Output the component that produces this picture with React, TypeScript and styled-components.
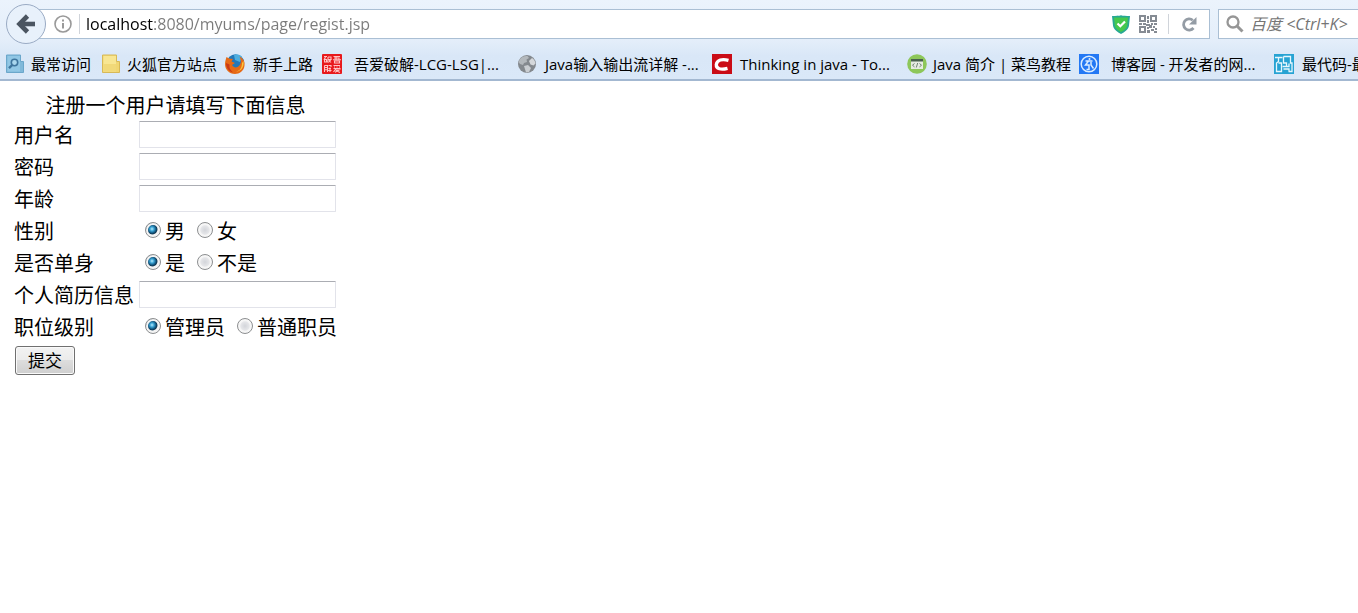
import React from "react";
import styled, { createGlobalStyle } from "styled-components";

const uiFont = `"Open Sans", "Noto Sans CJK SC", sans-serif`;

const GlobalStyle = createGlobalStyle`
  *, *::before, *::after { box-sizing: border-box; }
  html { overflow-x: hidden; }
  body {
    margin: 0;
    background: #fff;
    color: #000;
    font-family: ${uiFont};
  }
`;

const Chrome = styled.header`
  background: linear-gradient(#ebf3fc 0, #e4eefa 40px, #d9e7f7 56px, #dae8f8 100%);
  border-bottom: 2px solid #a3b8d1;
`;

const NavBar = styled.div`
  display: flex;
  align-items: center;
  height: 48px;
  padding-left: 6px;
  overflow: hidden;
`;

const BackButton = styled.button`
  flex: none;
  display: grid;
  place-items: center;
  width: 40px;
  height: 40px;
  padding: 0;
  border: 1px solid #9aabc4;
  border-radius: 50%;
  background: #e8f1fb;
  z-index: 1;
`;

const AddressBar = styled.div`
  flex: 1;
  min-width: 0;
  display: flex;
  align-items: center;
  height: 30px;
  margin-left: -8px;
  padding: 0 10px 0 14px;
  border: 1px solid #aabfd4;
  background: #fff;
`;

const AddressInput = styled.input`
  flex: 1;
  min-width: 0;
  height: 28px;
  padding: 0;
  border: 0;
  outline: 0;
  font: 16px/24px ${uiFont};
  color: transparent;
  background: linear-gradient(90deg, #000 67px, #7a7a7a 67px);
  background-clip: text;
  -webkit-background-clip: text;
`;

const Separator = styled.span<{ $gap: number }>`
  flex: none;
  width: 1px;
  height: 20px;
  margin: 0 ${(p) => p.$gap}px;
  background: #d0d4da;
`;

const IconButton = styled.button`
  flex: none;
  display: grid;
  place-items: center;
  width: 20px;
  height: 20px;
  padding: 0;
  border: 0;
  background: none;
`;

const PageActions = styled.div`
  display: flex;
  align-items: center;
  gap: 7px;
`;

const SearchBox = styled.label`
  flex: none;
  display: flex;
  align-items: center;
  gap: 6px;
  width: 148px;
  height: 30px;
  margin: 0 -8px 0 8px;
  padding-left: 7px;
  border: 1px solid #aabfd4;
  background: #fff;
`;

const SearchInput = styled.input`
  flex: 1;
  min-width: 0;
  height: 28px;
  padding: 0;
  border: 0;
  outline: 0;
  background: none;
  font: 16px/24px ${uiFont};
  &::placeholder {
    color: #757575;
    font-style: italic;
    opacity: 1;
  }
`;

const BookmarkBar = styled.nav`
  display: flex;
  height: 31px;
  padding-left: 5px;
  overflow: hidden;
`;

const Bookmark = styled.a<{ $width: number; $gap: number }>`
  flex: none;
  display: flex;
  align-items: center;
  gap: ${(p) => p.$gap}px;
  width: ${(p) => p.$width}px;
  height: 31px;
  color: #000;
  font-size: 15px;
  line-height: 24px;
  text-decoration: none;
  white-space: nowrap;
  svg { flex: none; }
`;

const Page = styled.main`
  padding: 9px 11px;
`;

const FormTable = styled.table`
  border-spacing: 2px;
  font-size: 20px;
  line-height: 28px;
`;

const Title = styled.th`
  height: 26px;
  padding: 2px 1px 0;
  font-weight: 400;
  line-height: 24px;
  text-align: center;
`;

const LabelCell = styled.th`
  padding: 2px 1px 0;
  font-weight: 400;
  text-align: left;
  white-space: nowrap;
`;

const FieldCell = styled.td`
  height: 30px;
  padding: 1px 1px 0 2px;
  vertical-align: top;
`;

const SubmitCell = styled.td`
  padding: 1px;
`;

const TextField = styled.input`
  display: block;
  width: 197px;
  height: 27px;
  padding: 2px 4px;
  border: 1px solid #e2e3ea;
  border-top-color: #abadb3;
  border-radius: 1px;
  background: #fff;
  font: 17px/20px ${uiFont};
`;

const RadioGroup = styled.div`
  display: flex;
  gap: 12px;
  padding: 1px 0 0 6px;
  white-space: nowrap;
`;

const RadioLabel = styled.label`
  display: flex;
  align-items: center;
  gap: 4px;
`;

const Radio = styled.input`
  appearance: none;
  flex: none;
  width: 16px;
  height: 16px;
  margin: 0 0 4px;
  border: 1px solid #8c8e90;
  border-radius: 50%;
  background: radial-gradient(circle at 7px 7px, #d3d5da 0, #e4e5e8 4px, #f7f7f7 6px);
  box-shadow: inset 0 0 0 2px #f6f6f6;
  &:checked {
    background: radial-gradient(circle at 6px 6px, #b9ecfb 0, #3ba5d6 2px, #11567f 4px, #0e3550 5px, transparent 6px), #f4f4f4;
    box-shadow: inset 0 0 0 2px #f4f4f4;
  }
`;

const SubmitButton = styled.button`
  display: block;
  width: 60px;
  height: 29px;
  margin: 1px;
  padding: 0;
  border: 1px solid #707070;
  border-radius: 3px;
  background: linear-gradient(#f2f2f2 0, #ebebeb 50%, #dddddd 50%, #cfcfcf 100%);
  box-shadow: inset 0 0 0 1px #fafafa;
  color: #000;
  font: 17px/24px ${uiFont};
`;

const BackIcon = () => (
  <svg width="22" height="22" viewBox="0 0 22 22" fill="none" stroke="#4b5561" strokeWidth="4.600">
    <path d="M12.500 3 4.500 11l8 8" />
    <path d="M5 11h15" />
  </svg>
);

const InfoIcon = () => (
  <svg width="18" height="18" viewBox="0 0 18 18" fill="none" stroke="#999" strokeWidth="1.600">
    <circle cx="9" cy="9" r="8" />
    <path d="M9 8v5.500" strokeWidth="2" />
    <path d="M9 4.500v2" strokeWidth="2" />
  </svg>
);

const ShieldIcon = () => (
  <svg width="18" height="19" viewBox="0 0 18 19">
    <path d="M0 1c4 0 7 0 9-.7C11 1 14 1 18 1l-1 9.500c-.5 4-4.500 6.500-8 8.500-3.500-2-7.500-4.500-8-8.500z" fill="#27a894" />
    <path d="M2 2.500h14l-.8 8c-.4 2.800-3.200 4.800-6.200 6.500-3-1.700-5.800-3.700-6.200-6.500z" fill="#45c84d" />
    <path d="m5.500 8.500 2.800 2.800L13 6.500" fill="none" stroke="#fff" strokeWidth="2.200" />
  </svg>
);

const QrIcon = () => (
  <svg width="18" height="18" viewBox="0 0 18 18" fill="#858b93">
    <path
      fillRule="evenodd"
      d="M0 0h7v7H0zM2 2v3h3V2zM11 0h7v7h-7zM13 2v3h3V2zM0 11h7v7H0zM2 13v3h3v-3z"
    />
    <path d="M8 1h2v3H8zM8 5h2v3H8zM0 8h3v2H0zM4 8h3v2H4zM7 9h4v2H7zM12 8h2v2h-2zM15 8h3v2h-3zM8 12h2v2H8zM10 10h3v3h-3zM14 11h2v2h-2zM16 13h2v2h-2zM12 14h3v2h-3zM8 15h3v3H8zM15 16h3v2h-3z" />
  </svg>
);

const ReloadIcon = () => (
  <svg width="16" height="16" viewBox="0 0 16 16">
    <path d="M12.500 12A5.600 5.600 0 1 1 11.800 4.200" fill="none" stroke="#949ca5" strokeWidth="2.800" />
    <path d="M15.500 1v7.500H8z" fill="#949ca5" />
  </svg>
);

const SearchIcon = () => (
  <svg width="18" height="18" viewBox="0 0 18 18" fill="none" stroke="#969696">
    <circle cx="7" cy="7" r="5.500" strokeWidth="2.300" />
    <path d="m11 11 5.500 5.500" strokeWidth="3" />
  </svg>
);

const FrequentIcon = () => (
  <svg width="20" height="20" viewBox="0 0 20 20">
    <path d="M1.500 1h14v6.500h3v11h-17z" fill="#80b9da" stroke="#6ba7cb" />
    <path d="M2.500 2H15v15.500H2.500z" fill="#91c7e5" />
    <circle cx="9.500" cy="8.500" r="3.200" fill="#aad7ee" stroke="#3f759d" strokeWidth="1.600" />
    <path d="m7.200 11-3.200 3.200" stroke="#3f759d" strokeWidth="2.400" />
  </svg>
);

const FolderIcon = () => (
  <svg width="20" height="20" viewBox="0 0 20 20">
    <path d="M1.500 1h14v6.500h3v11h-17z" fill="#f0d672" stroke="#d7b957" />
    <path d="M2.500 2H15v15.500H2.500z" fill="#f8e692" />
    <path d="M2.500 10H15v7.500H2.500z" fill="#f1d979" />
  </svg>
);

const FirefoxIcon = () => (
  <svg width="20" height="20" viewBox="0 0 20 20">
    <circle cx="10.500" cy="9" r="8.700" fill="#2379ba" />
    <path d="M9 1c4-1 7 0 8 2l-2 5-5-2z" fill="#4eafe0" />
    <path
      d="M1.500 3 4 4.500 8 5 6.500 7.500 10 9 7 11c2 3.500 6 3 8-.5 1.500-2.500 1-5-.5-8 4 2 5.500 5 5 9C19 17 14.500 20 10 20 4 20 0 15.500 0 10c0-3 1-5 1.500-7z"
      fill="#e66a16"
    />
    <path d="M18.500 7c1 7-3.500 11-9 11 5-.5 7.500-4 7.500-9z" fill="#fbc63a" />
    <path d="M1 9c0 5 3 8.500 7 9.500-3-2.500-4-5-3.500-8z" fill="#c93817" />
  </svg>
);

const SealIcon = () => (
  <svg width="20" height="20" viewBox="0 0 20 20" fill="none" stroke="#ffc4c4" strokeWidth="1.100">
    <rect width="20" height="20" rx="1" fill="#e8191c" stroke="none" />
    <path d="M2 2.500h3M3.500 3 2 6M2.500 5.500h2v2.500h-2zM6 3h3v2M6 3v3L5.500 8.500M6.500 5.500H9L6.500 8.500M7 6l2 2.500" />
    <path d="M11.500 2.500h6.500M14 2.500v3M12 4h5v1.500M11 5.700h8M12.500 7h5v2h-5z" />
    <path d="M2.500 11.500h3V18M2.500 11.500V18M2.500 13.500h3M2.500 15.700h3M6.500 11.500H9V13M6.500 14.500H9M6 16.500h3.500M8 13.500V18" />
    <path d="M11.500 11.500h6.500M12 13h1M14.500 13h1M17 13h1M11.500 14.500h7M14 14.500 11.500 18M13.500 16h3.500L13 18.300M14 16.500l4 2" />
  </svg>
);

const GlobeIcon = () => (
  <svg width="20" height="20" viewBox="0 0 20 20">
    <circle cx="10" cy="10" r="9" fill="#84898e" />
    <path d="M3 5c2-2.500 5-3.500 7.500-3L12 4 9.500 5.500 10 8 7 9l-1 2-3-1-1.500-2z" fill="#b3b8bc" />
    <path d="m12 7 3-3c2 1 3 3 3.500 5.500l-2 2-3-1z" fill="#d5d8db" />
    <path d="m7 12 4-1 3 3-2 4-3 .5z" fill="#c9cdd1" />
  </svg>
);

const CsdnIcon = () => (
  <svg width="20" height="20" viewBox="0 0 20 20" aria-hidden="true">
    <rect width="20" height="20" fill="#ca0c16" />
    <path d="M16.500 6.300C10 4.500 5 6 4.300 10.500 4 15 9 16 15.500 14.300" fill="none" stroke="#fff" strokeWidth="3.300" />
  </svg>
);

const CodeIcon = () => (
  <svg width="20" height="20" viewBox="0 0 20 20">
    <circle cx="10" cy="10" r="9.800" fill="#8dc75a" />
    <rect x="4" y="5" width="12" height="10" fill="#e6ece2" />
    <path d="M4 5h12v2.500H4z" fill="#49614d" />
    <path d="m7.500 9.500-2 1.700 2 1.700m5-3.400 2 1.700-2 1.700M10.700 9l-1.400 4.500" fill="none" stroke="#718172" />
  </svg>
);

const BlogIcon = () => (
  <svg width="20" height="20" viewBox="0 0 20 20" fill="none" stroke="#d9ecff">
    <rect width="20" height="20" fill="#2378f4" stroke="none" />
    <circle cx="10" cy="10" r="7.800" strokeWidth="1.500" />
    <path d="M6.500 7h7M9.500 7 6.500 11h3.500v4.500H7.500M12 8v3l2.500 3.500" strokeWidth="1.500" />
    <circle cx="10.500" cy="5" r="1" fill="#d9ecff" stroke="none" />
  </svg>
);

const CircuitIcon = () => (
  <svg width="20" height="20" viewBox="0 0 20 20" fill="none" stroke="#e6f7fd" strokeWidth="1.300">
    <rect width="20" height="20" fill="#27a3d3" stroke="none" />
    <path d="M1 3.500h7.500M4.500 4v3.500L2.500 9v8.500h5V9h-3" />
    <path d="M9.500 2.500h7V9H18v8.500h-3.500M9.500 2.500V9h3v3.500M8.500 12.500H15V9.500M9.500 15h5.500v2.500" />
  </svg>
);

const bookmarks = [
  { title: "最常访问", icon: FrequentIcon, width: 96, gap: 6 },
  { title: "火狐官方站点", icon: FolderIcon, width: 124, gap: 6 },
  { title: "新手上路", icon: FirefoxIcon, width: 97, gap: 8 },
  { title: "吾爱破解-LCG-LSG|...", icon: SealIcon, width: 195, gap: 12 },
  { title: "Java输入输出流详解 -...", icon: GlobeIcon, width: 195, gap: 8 },
  { title: "Thinking in java - To...", icon: CsdnIcon, width: 195, gap: 8 },
  { title: "Java 简介 | 菜鸟教程", icon: CodeIcon, width: 172, gap: 6 },
  { title: "博客园 - 开发者的网...", icon: BlogIcon, width: 195, gap: 12 },
  { title: "最代码-最专业的源码", icon: CircuitIcon, width: 195, gap: 8 },
];

function TextRow({ id, label, type = "text" }: { id: string; label: string; type?: string }) {
  return (
    <tr>
      <LabelCell scope="row"><label htmlFor={id}>{label}</label></LabelCell>
      <FieldCell><TextField id={id} name={id} type={type} /></FieldCell>
    </tr>
  );
}

function RadioRow({ name, label, options }: { name: string; label: string; options: string[] }) {
  return (
    <tr>
      <LabelCell scope="row" id={`${name}-label`}>{label}</LabelCell>
      <FieldCell>
        <RadioGroup role="radiogroup" aria-labelledby={`${name}-label`}>
          {options.map((option, i) => (
            <RadioLabel key={option}>
              <Radio type="radio" name={name} value={option} defaultChecked={i === 0} />
              {option}
            </RadioLabel>
          ))}
        </RadioGroup>
      </FieldCell>
    </tr>
  );
}

export default function App() {
  return (
    <>
      <GlobalStyle />
      <Chrome>
        <NavBar>
          <BackButton type="button" aria-label="后退"><BackIcon /></BackButton>
          <AddressBar>
            <IconButton type="button" aria-label="网站信息"><InfoIcon /></IconButton>
            <Separator $gap={6} />
            <AddressInput aria-label="地址" defaultValue="localhost:8080/myums/page/regist.jsp" spellCheck={false} />
            <PageActions>
              <IconButton type="button" aria-label="安全"><ShieldIcon /></IconButton>
              <IconButton type="button" aria-label="二维码"><QrIcon /></IconButton>
            </PageActions>
            <Separator $gap={10} />
            <IconButton type="button" aria-label="刷新"><ReloadIcon /></IconButton>
          </AddressBar>
          <SearchBox>
            <SearchIcon />
            <SearchInput aria-label="搜索" placeholder="百度 <Ctrl+K>" />
          </SearchBox>
        </NavBar>
        <BookmarkBar aria-label="书签">
          {bookmarks.map(({ title, icon: Icon, width, gap }) => (
            <Bookmark key={title} href="#" $width={width} $gap={gap}>
              <Icon />
              {title}
            </Bookmark>
          ))}
        </BookmarkBar>
      </Chrome>
      <Page>
        <form onSubmit={(e) => e.preventDefault()}>
          <FormTable>
            <thead>
              <tr><Title colSpan={2}>注册一个用户请填写下面信息</Title></tr>
            </thead>
            <tbody>
              <TextRow id="username" label="用户名" />
              <TextRow id="password" label="密码" type="password" />
              <TextRow id="age" label="年龄" />
              <RadioRow name="sex" label="性别" options={["男", "女"]} />
              <RadioRow name="single" label="是否单身" options={["是", "不是"]} />
              <TextRow id="resume" label="个人简历信息" />
              <RadioRow name="level" label="职位级别" options={["管理员", "普通职员"]} />
              <tr>
                <SubmitCell colSpan={2}><SubmitButton type="submit">提交</SubmitButton></SubmitCell>
              </tr>
            </tbody>
          </FormTable>
        </form>
      </Page>
    </>
  );
}
